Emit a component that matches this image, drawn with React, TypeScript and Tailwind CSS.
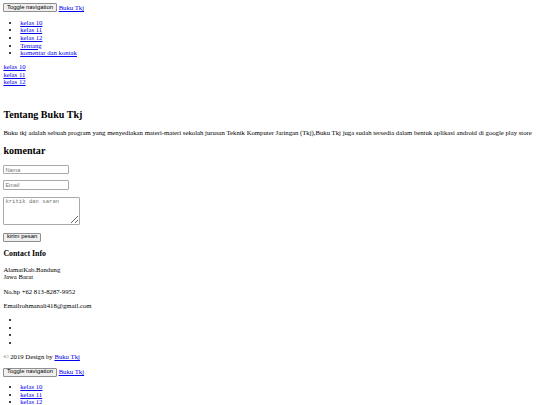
import React from 'react';

// Page is a plain, unstyled document shown at ~0.42 scale,
// so every browser default is written out at that scale.
const link = 'text-[#0000ee] underline';
const btn =
  'h-[9px] px-[2.7px] bg-[#efefef] border border-[#8f8f8f] rounded-[1px] text-[5.9px] leading-none text-black align-middle';

function NavBar() {
  return (
    <div>
      <div className="flex items-center gap-[2px] h-[9px]">
        <button className={btn} style={{ fontFamily: '"Liberation Sans", Arial, sans-serif' }}>
          Toggle navigation
        </button>
        <a href="#" className={link}>
          Buku Tkj
        </a>
      </div>
      <ul className="list-disc pl-[16.8px] my-[6.4px]">
        {['kelas 10', 'kelas 11', 'kelas 12', 'Tentang', 'komentar dan kontak'].map((t) => (
          <li key={t}>
            <a href="#" className={link}>
              {t}
            </a>
          </li>
        ))}
      </ul>
    </div>
  );
}

export default function App() {
  return (
    <div
      className="p-[3.4px] text-[6.72px] leading-[7.6px] text-black bg-white min-h-[405px]"
      style={{ fontFamily: '"Liberation Serif", "Times New Roman", serif' }}
    >
      <NavBar />

      <div>
        {['kelas 10', 'kelas 11', 'kelas 12'].map((t) => (
          <a key={t} href="#" className={`${link} block w-fit`}>
            {t}
          </a>
        ))}
      </div>

      <div className="h-[14.8px]" />

      {/* Tentang */}
      <h2 className="text-[10.08px] leading-[11.6px] font-bold my-[8.4px]">Tentang Buku Tkj</h2>
      <p className="whitespace-nowrap">
        Buku tkj adalah sebuah program yang menyediakan materi-materi sekolah jurusan Teknik Komputer
        Jaringan (Tkj),Buku Tkj juga sudah tersedia dalam bentuk aplikasi android di google play store
      </p>

      {/* komentar */}
      <h2 className="text-[10.08px] leading-[11.6px] font-bold my-[8.4px]">komentar</h2>
      <form className="flex flex-col items-start" onSubmit={(e) => e.preventDefault()}>
        <input
          placeholder="Nama"
          className="w-[66px] h-[9px] px-[1px] border border-[#a9a9a9] rounded-[1px] text-[5.6px] placeholder:text-[#757575]"
          style={{ fontFamily: '"Liberation Sans", Arial, sans-serif' }}
        />
        <input
          placeholder="Email"
          className="mt-[6px] w-[66px] h-[9.5px] px-[1px] border border-[#a9a9a9] rounded-[1px] text-[5.6px] placeholder:text-[#757575]"
          style={{ fontFamily: '"Liberation Sans", Arial, sans-serif' }}
        />
        <textarea
          placeholder="kritik dan saran"
          className="mt-[7px] w-[77px] h-[28px] px-[1px] py-[1px] border border-[#a9a9a9] rounded-[1px] text-[5.6px] leading-[6.5px] placeholder:text-[#757575]"
          style={{ fontFamily: '"Liberation Mono", "Courier New", monospace' }}
        />
        <button
          type="submit"
          className={`${btn} mt-[8px]`}
          style={{ fontFamily: '"Liberation Sans", Arial, sans-serif' }}
        >
          kirim pesan
        </button>
      </form>

      {/* Contact Info */}
      <h3 className="text-[7.86px] leading-[9px] font-bold mt-[7.4px] mb-[7.8px]">Contact Info</h3>
      <p className="mb-[6.7px]">
        AlamatKab.Bandung
        <br />
        Jawa Barat
      </p>
      <p className="mb-[6.7px]">No.hp +62 813-8287-9952</p>
      <p className="mb-[6.7px]">Emailrohmanali418@gmail.com</p>
      <ul className="list-disc pl-[16.8px] mb-[6.7px]">
        <li className="h-[7.6px]" />
        <li className="h-[7.6px]" />
        <li className="h-[7.6px]" />
        <li className="h-[7.6px]" />
      </ul>
      <p className="mb-[6.7px]">
        © 2019 Design by{' '}
        <a href="#" className={link}>
          Buku Tkj
        </a>
      </p>

      <NavBar />
    </div>
  );
}
